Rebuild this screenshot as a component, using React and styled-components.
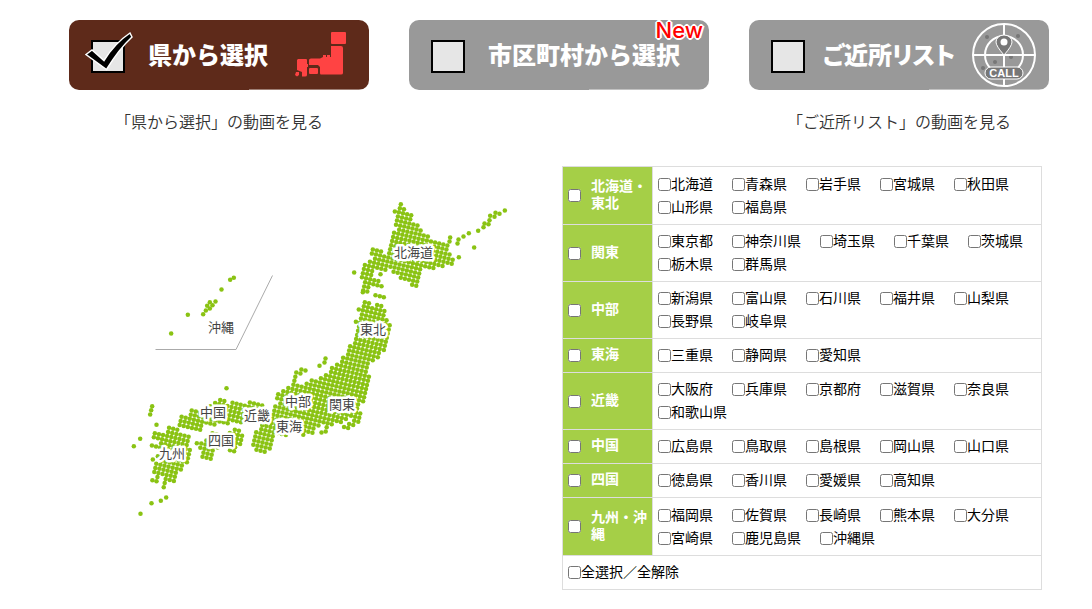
import React, { useState } from 'react'
import styled, { createGlobalStyle } from 'styled-components'

const GlobalStyle = createGlobalStyle`
  * {
    box-sizing: border-box;
  }

  body {
    margin: 0;
    background: #fff;
    color: #000;
    font-family: 'Noto Sans CJK JP', sans-serif;
    font-size: 14px;
  }
`

const Page = styled.div`
  padding: 20px 50px 19px 56px;
`

const Tabs = styled.nav`
  display: grid;
  grid-template-columns: repeat(3, 300px);
  justify-content: end;
  column-gap: 40px;
  margin-right: -7px;
`

const TabItem = styled.div`
  display: flex;
  flex-direction: column;
  align-items: center;
  gap: 19px;
`

const TabButton = styled.button`
  position: relative;
  display: flex;
  align-items: center;
  width: 100%;
  height: 70px;
  padding: 0 12px 0 16px;
  border: none;
  border-radius: 10px;
  background: ${props => props.$active ? '#5e2a1a' : '#999'};
  color: #fff;
  font-family: inherit;
  text-align: left;
  cursor: pointer;

  &::after {
    content: '';
    position: absolute;
    right: 6px;
    bottom: 0;
    width: 114px;
    height: 1px;
    background: rgba(255, 255, 255, .4);
  }
`

const TabText = styled.span`
  flex: 1;
  margin-left: ${props => props.$wide ? '10px' : '15px'};
  padding-bottom: 2px;
  font-size: 24px;
  line-height: 28px;
  font-weight: 900;
  font-feature-settings: ${props => props.$wide ? "'palt'" : 'normal'};
  white-space: nowrap;
`

const NewBadge = styled.span`
  position: absolute;
  top: 0;
  right: 6px;
  color: #f00;
  font-family: Inter, sans-serif;
  font-size: 22px;
  line-height: 20px;
  font-weight: 500;
  text-shadow: 1px 1px #fff, -1px 1px #fff, 1px -1px #fff, -1px -1px #fff,
    2px 0 #fff, -2px 0 #fff, 0 2px #fff, 0 -2px #fff;
`

const MovieLink = styled.a`
  color: #333;
  font-size: 16px;
  line-height: 24px;
  font-weight: 350;
  text-decoration: none;
`

const Main = styled.main`
  display: grid;
  grid-template-columns: 1fr 480px;
  align-items: start;
  margin-top: 33px;
`

const MapSvg = styled.svg`
  display: block;
  width: 400px;
  margin: 24px 0 0 64px;
`

const MapLabel = styled.text`
  font-size: 13px;
  font-weight: 400;
  fill: #444;
  stroke: #fff;
  stroke-width: 5px;
  stroke-linejoin: round;
  paint-order: stroke;
`

const AreaTable = styled.table`
  width: 100%;
  border-collapse: collapse;
  line-height: 23px;
`

const AreaRow = styled.tr`
  height: ${props => props.$tall ? '58px' : 'auto'};
`

const AreaHead = styled.th`
  width: 90px;
  padding: 3px 0 5px 5px;
  border: 1px solid #ddd;
  background: #a5cf47;
  color: #fff;
  line-height: 17px;
  text-align: left;
`

const AreaName = styled.label`
  display: grid;
  grid-template-columns: 13px 1fr;
  align-items: center;
  column-gap: 10px;

  span {
    padding-bottom: 2px;
  }
`

const Cell = styled.td`
  padding: 4px 5px 6px;
  border: 1px solid #ddd;
`

const PrefList = styled.div`
  display: flex;
  flex-wrap: wrap;
  column-gap: 19px;
`

const Pref = styled.label`
  display: flex;
  align-items: center;
  white-space: nowrap;
`

const Check = styled.input`
  width: 13px;
  height: 13px;
  margin: 2px 0 0;
`

const areas = [
  { name: '北海道・東北', prefs: ['北海道', '青森県', '岩手県', '宮城県', '秋田県', '山形県', '福島県'] },
  { name: '関東', prefs: ['東京都', '神奈川県', '埼玉県', '千葉県', '茨城県', '栃木県', '群馬県'] },
  { name: '中部', prefs: ['新潟県', '富山県', '石川県', '福井県', '山梨県', '長野県', '岐阜県'] },
  { name: '東海', prefs: ['三重県', '静岡県', '愛知県'] },
  { name: '近畿', prefs: ['大阪府', '兵庫県', '京都府', '滋賀県', '奈良県', '和歌山県'] },
  { name: '中国', prefs: ['広島県', '鳥取県', '島根県', '岡山県', '山口県'] },
  { name: '四国', prefs: ['徳島県', '香川県', '愛媛県', '高知県'] },
  { name: '九州・沖縄', prefs: ['福岡県', '佐賀県', '長崎県', '熊本県', '大分県', '宮崎県', '鹿児島県', '沖縄県'] }
]

const allPrefs = areas.flatMap(area => area.prefs)

// Outlines are drawn at three times the map scale, each from its own origin.
const islands = [
  {
    origin: [340, 190],
    start: [181, 41],
    outline: [
      [181, 34], [194, 50], [208, 66], [220, 88], [238, 112], [260, 130], [264, 144], [320, 156],
      [330, 188], [350, 206], [332, 222], [300, 234], [262, 234], [246, 240], [236, 296], [222, 290],
      [188, 272], [165, 254], [150, 238], [132, 248], [98, 240], [98, 256], [128, 280], [130, 297], [92, 292],
      [85, 302], [62, 308], [72, 280], [62, 256], [64, 222], [95, 205], [85, 195], [92, 174],
      [115, 178], [140, 195], [144, 160], [152, 134], [168, 110], [163, 90], [172, 65], [172, 41]
    ]
  },
  {
    origin: [220, 290],
    start: [433, 35],
    outline: [
      [433, 28], [454, 34], [452, 48], [466, 48], [466, 36], [482, 40], [494, 26], [494, 50], [492, 75], [506, 85],
      [508, 100], [512, 120], [500, 160], [484, 190], [480, 204], [462, 214], [448, 217], [445, 235],
      [446, 252], [453, 260], [446, 302], [435, 305], [428, 340], [415, 350], [412, 365], [428, 372],
      [424, 392], [408, 402], [378, 420], [368, 412], [382, 400], [392, 388], [380, 384], [360, 396],
      [330, 402], [318, 432], [300, 428], [312, 402], [292, 410], [280, 436],
      [250, 434], [225, 425], [200, 442], [180, 440], [165, 432], [160, 452], [150, 472], [136, 485],
      [104, 477], [93, 460], [102, 422], [125, 402], [158, 395], [153, 378], [156, 350], [172, 340],
      [163, 325], [170, 310], [198, 294], [215, 286], [213, 265], [222, 242], [240, 234], [260, 240],
      [250, 250], [232, 254], [228, 270], [240, 282], [262, 275], [275, 266], [300, 260], [325, 248],
      [328, 230], [348, 220], [360, 200], [378, 198], [378, 180], [388, 160], [402, 154], [408, 120],
      [414, 100], [400, 94], [414, 78], [410, 55], [424, 50]
    ]
  },
  {
    origin: [120, 370],
    start: [336, 97],
    outline: [
      [172, 136], [202, 136], [215, 118], [240, 120], [262, 102], [280, 93], [292, 83], [316, 88],
      [322, 100], [330, 92], [378, 102], [385, 90], [432, 100], [440, 115], [380, 124], [372, 150],
      [362, 164], [340, 155], [322, 166], [300, 160], [278, 168], [262, 160], [246, 165], [238, 187],
      [215, 183], [192, 165], [182, 175], [170, 155]
    ]
  },
  {
    origin: [120, 370],
    start: [343, 178],
    outline: [
      [268, 182], [305, 190], [334, 186], [336, 172], [358, 176], [370, 192], [366, 222], [348, 232],
      [344, 248], [334, 246], [320, 230], [284, 236], [275, 272], [248, 270], [236, 235], [238, 214], [262, 205]
    ]
  },
  {
    origin: [120, 370],
    start: [103, 188],
    outline: [
      [95, 182], [136, 184], [142, 168], [178, 173], [186, 188], [210, 195], [208, 206], [198, 215],
      [208, 230], [214, 250], [206, 270], [192, 290], [180, 300], [167, 337], [140, 340], [132, 358], [126, 350],
      [132, 316], [118, 306], [112, 337], [90, 335], [100, 315], [93, 300], [102, 276], [118, 262],
      [120, 240], [88, 230], [95, 220], [112, 215], [95, 207]
    ]
  }
]

const islets = [
  {
    origin: [340, 190],
    dots: [
      [41, 246], [120, 251], [329, 141], [327, 153], [354, 147], [351, 159], [369, 138], [385, 128],
      [413, 121], [429, 110], [432, 99], [444, 101], [447, 89], [449, 76], [462, 79], [465, 67],
      [477, 70], [493, 60], [401, 171], [355, 200], [105, 314], [118, 317], [130, 320],
      [163, 63]
    ]
  },
  { origin: [220, 290], dots: [[315, 204], [312, 216], [297, 226], [18, 293], [303, 426], [427, 5]] },
  {
    origin: [120, 370],
    dots: [
      [95, 107], [92, 119], [89, 132], [108, 163], [59, 205], [40, 227], [137, 381], [121, 391],
      [93, 398], [60, 430], [97, 267], [112, 257], [229, 218]
    ]
  },
  {
    origin: [140, 265],
    dots: [
      [280, 37], [269, 43], [243, 72], [225, 108], [208, 110], [200, 121], [216, 119], [208, 129],
      [196, 135], [188, 146], [142, 148], [92, 204]
    ]
  }
]

const mapLabels = [
  ['北海道', 394, 257], ['東北', 360, 334], ['沖縄', 208, 332], ['中部', 285, 406], ['関東', 329, 409],
  ['近畿', 244, 420], ['東海', 276, 431], ['中国', 200, 417], ['四国', 208, 445], ['九州', 159, 458]
]

const isInside = (x, y, outline) => {
  let inside = false
  outline.forEach(([x1, y1], i) => {
    const [x2, y2] = outline[(i + 1) % outline.length]
    if ((y1 > y) !== (y2 > y) && x < (x2 - x1) * (y - y1) / (y2 - y1) + x1) {
      inside = !inside
    }
  })
  return inside
}

const fillIsland = ({ origin, start, outline }) => {
  const dots = []
  for (let row = -50; row < 50; row++) {
    for (let col = -50; col < 50; col++) {
      const x = start[0] + col * 12.3 - row * 2.9
      const y = start[1] + col * 2.9 + row * 12.3
      if (isInside(x, y, outline)) {
        dots.push([origin[0] + x / 3, origin[1] + y / 3])
      }
    }
  }
  return dots
}

const mapDots = [
  ...islands.flatMap(fillIsland),
  ...islets.flatMap(({ origin, dots }) => dots.map(([x, y]) => [origin[0] + x / 3, origin[1] + y / 3]))
]

const JapanMap = () => (
  <MapSvg viewBox="120 190 400 330" role="img" aria-label="日本地図">
    <path d="M155.500 349.500H236L272.500 275.500" fill="none" stroke="#aaa" />
    <g fill="#8ac313">
      {mapDots.map(([x, y]) => <circle key={`${x},${y}`} cx={x + 0.5} cy={y + 0.5} r="2.250" />)}
    </g>
    {mapLabels.map(([name, x, y]) => <MapLabel key={name} x={x} y={y}>{name}</MapLabel>)}
  </MapSvg>
)

const BoxIcon = ({ checked }) => (
  <svg width="48" height="48" viewBox="0 0 48 48" aria-hidden="true">
    <rect x="7" y="10" width="32" height="31" fill="#e6e6e6" stroke="#000" strokeWidth="2" />
    {checked && (
      <path
        d="M1 23.500L7 19L19 29.500Q30 12 45 2L47 6Q34 18 21.500 38.500Z"
        fill="#000"
        stroke="#fff"
        strokeWidth="1.500"
      />
    )}
  </svg>
)

const JapanIcon = () => (
  <svg width="64" height="64" viewBox="10 0 64 64" fill="#ff4343" aria-hidden="true">
    <rect x="48" y="9" width="15" height="12" rx="1" />
    <path d="M48 23H58Q60 23 60 25V50Q60 51.500 58 51.500H38Q37 51.500 37 50V44L35 42H26V37Q26 35.500 28 35.500H37L40 34V32H43V34H44V32H47V34H48Z" />
    <rect x="26" y="45" width="9" height="6" rx="1" />
    <path d="M15 36H23Q24 36 24 37V41H25V44H24V52Q24 53.500 22 53.500H19V49L14 47V37Z" />
    <path d="M13 49H16V52L14 53.500L12 52Z" />
  </svg>
)

const CallIcon = () => (
  <svg width="66" height="66" viewBox="0 0 66 66" aria-hidden="true">
    <g fill="#777">
      <circle cx="16" cy="15" r="2" />
      <circle cx="47" cy="14" r="2" />
      <circle cx="40" cy="35" r="2" />
      <circle cx="24" cy="40" r="2" />
      <circle cx="12" cy="46" r="2" />
    </g>
    <g fill="none" stroke="#fff" strokeWidth="2">
      <circle cx="33" cy="33" r="31" />
      <circle cx="33" cy="33" r="19" />
      <path d="M33 2V64M2 33H64" />
    </g>
    <path d="M33 33Q25 24 25 20A8 7 0 0 1 41 20Q41 24 33 33Z" fill="#777" stroke="#fff" />
    <circle cx="33" cy="20" r="3.500" fill="#fff" />
    <rect x="14" y="45" width="38" height="12" rx="6" fill="#777" stroke="#fff" />
    <text x="33" y="55" fill="#fff" fontFamily="Liberation Sans, sans-serif" fontSize="11" fontWeight="700" textAnchor="middle">CALL</text>
  </svg>
)

const App = () => {
  const [tab, setTab] = useState('pref')
  const [selected, setSelected] = useState([])

  const hasAll = prefs => prefs.every(pref => selected.includes(pref))

  const toggle = prefs => {
    const rest = selected.filter(pref => !prefs.includes(pref))
    setSelected(hasAll(prefs) ? rest : [...rest, ...prefs])
  }

  return (
    <Page>
      <GlobalStyle />
      <Tabs>
        <TabItem>
          <TabButton $active={tab === 'pref'} onClick={() => setTab('pref')}>
            <BoxIcon checked={tab === 'pref'} />
            <TabText>県から選択</TabText>
            <JapanIcon />
          </TabButton>
          <MovieLink href="#pref-movie">「県から選択」の動画を見る</MovieLink>
        </TabItem>
        <TabItem>
          <TabButton $active={tab === 'city'} onClick={() => setTab('city')}>
            <BoxIcon checked={tab === 'city'} />
            <TabText>市区町村から選択</TabText>
            <NewBadge>New</NewBadge>
          </TabButton>
        </TabItem>
        <TabItem>
          <TabButton $active={tab === 'near'} onClick={() => setTab('near')}>
            <BoxIcon checked={tab === 'near'} />
            <TabText $wide>ご近所リスト</TabText>
            <CallIcon />
          </TabButton>
          <MovieLink href="#near-movie">「ご近所リスト」の動画を見る</MovieLink>
        </TabItem>
      </Tabs>
      <Main>
        <JapanMap />
        <AreaTable>
          <tbody>
            {areas.map(({ name, prefs }) => (
              <AreaRow key={name} $tall={name.length > 4}>
                <AreaHead scope="row">
                  <AreaName>
                    <Check type="checkbox" checked={hasAll(prefs)} onChange={() => toggle(prefs)} />
                    <span>{name}</span>
                  </AreaName>
                </AreaHead>
                <Cell>
                  <PrefList>
                    {prefs.map(pref => (
                      <Pref key={pref}>
                        <Check type="checkbox" checked={hasAll([pref])} onChange={() => toggle([pref])} />
                        {pref}
                      </Pref>
                    ))}
                  </PrefList>
                </Cell>
              </AreaRow>
            ))}
            <tr>
              <Cell colSpan={2}>
                <Pref>
                  <Check type="checkbox" checked={hasAll(allPrefs)} onChange={() => toggle(allPrefs)} />
                  全選択／全解除
                </Pref>
              </Cell>
            </tr>
          </tbody>
        </AreaTable>
      </Main>
    </Page>
  )
}

export default App
